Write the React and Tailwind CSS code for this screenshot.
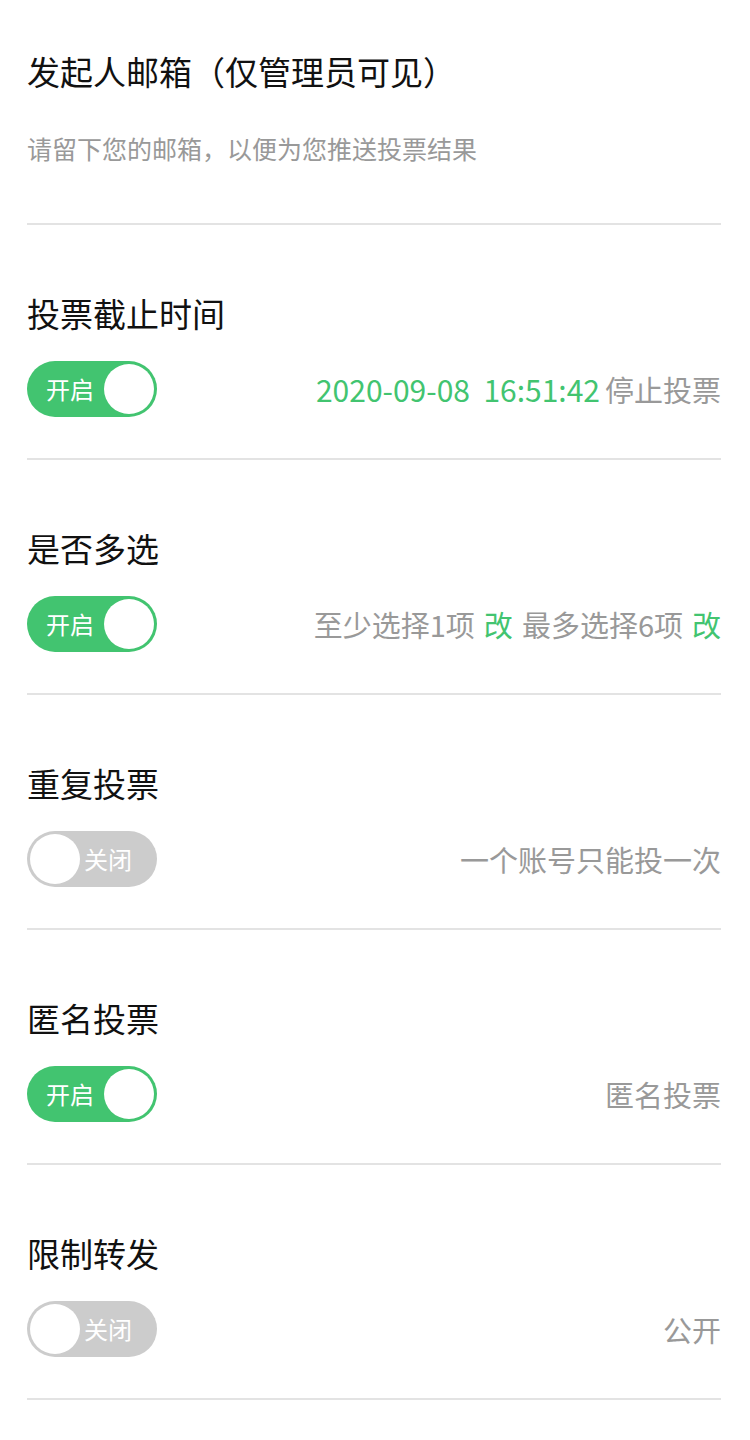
import React from "react";

const font = { fontFamily: '"Noto Sans CJK SC", "Noto Sans", sans-serif' };

function Toggle({ on }) {
  if (on) {
    return (
      <div className="flex h-[56px] w-[130px] shrink-0 items-center justify-between rounded-full bg-[#42c470] pl-[19px] pr-[3px]">
        <span className="text-[24px] leading-none text-white">开启</span>
        <span className="h-[50px] w-[50px] rounded-full bg-white" />
      </div>
    );
  }
  return (
    <div className="flex h-[56px] w-[130px] shrink-0 items-center justify-between rounded-full bg-[#cccccc] pl-[3px] pr-[25px]">
      <span className="h-[50px] w-[50px] rounded-full bg-white" />
      <span className="text-[24px] leading-none text-white">关闭</span>
    </div>
  );
}

function Section({ title, on, children }) {
  return (
    <div className="border-b-2 border-[#e3e3e3] pt-[66px] pb-[41px]">
      <div className="text-[33px] leading-[44px] text-[#111]">{title}</div>
      <div className="mt-[26px] flex items-center justify-between">
        <Toggle on={on} />
        <div className="flex items-center text-[29px] leading-none text-[#999]">{children}</div>
      </div>
    </div>
  );
}

export default function App() {
  return (
    <div className="min-h-[1440px] w-[750px] bg-white pl-[27px] pr-[29px]" style={font}>
      <div className="border-b-2 border-[#e3e3e3] pt-[49px] pb-[57px]">
        <div className="text-[33px] leading-[44px] text-[#111]">发起人邮箱（仅管理员可见）</div>
        <div className="mt-[37px] text-[25px] leading-[36px] text-[#999]">请留下您的邮箱，以便为您推送投票结果</div>
      </div>
      <Section title="投票截止时间" on>
        <span className="mr-[5px] whitespace-pre text-[30px] text-[#42c470]">2020-09-08  16:51:42</span>
        <span>停止投票</span>
      </Section>
      <Section title="是否多选" on>
        <span>至少选择1项</span>
        <span className="ml-[9px] text-[#42c470]">改</span>
        <span className="ml-[9px]">最多选择6项</span>
        <span className="ml-[9px] text-[#42c470]">改</span>
      </Section>
      <Section title="重复投票" on={false}>
        一个账号只能投一次
      </Section>
      <Section title="匿名投票" on>
        匿名投票
      </Section>
      <Section title="限制转发" on={false}>
        公开
      </Section>
    </div>
  );
}
